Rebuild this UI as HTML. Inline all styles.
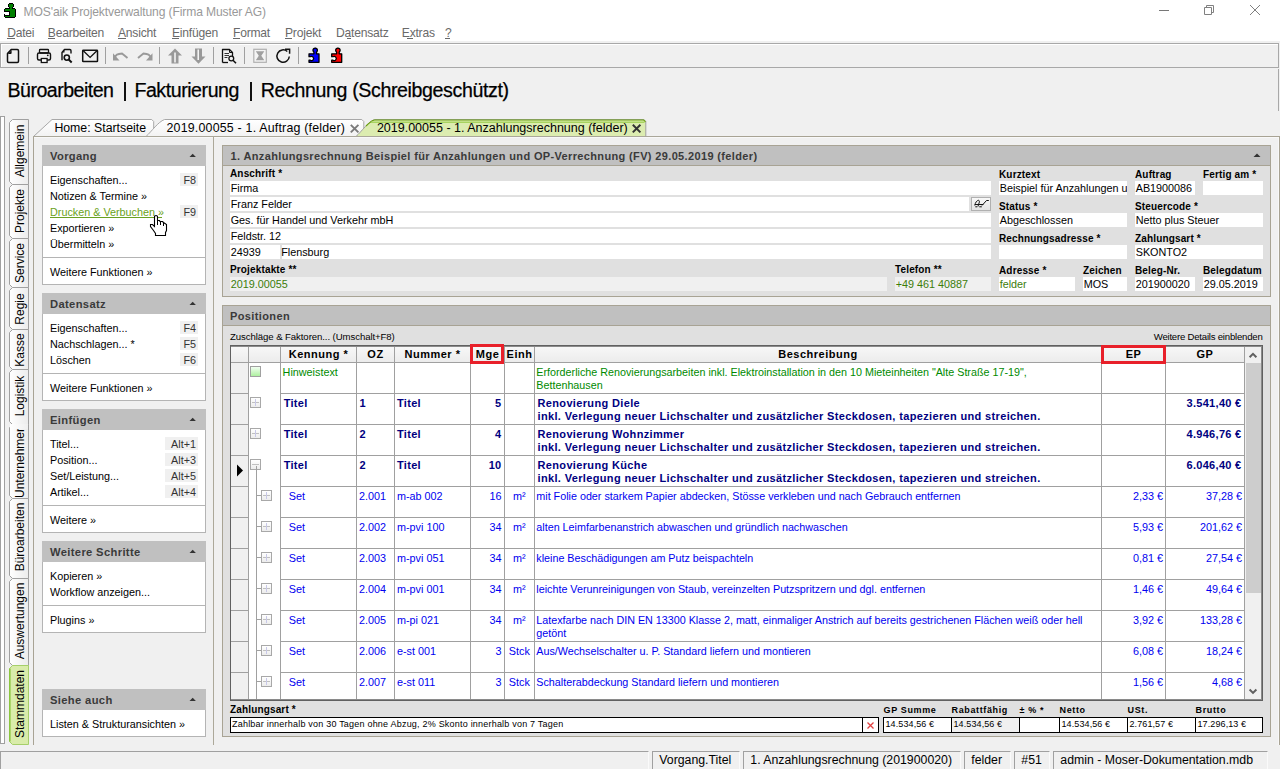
<!DOCTYPE html>
<html><head><meta charset="utf-8">
<style>
html,body{margin:0;padding:0;}
body{width:1280px;height:770px;overflow:hidden;position:relative;background:#f0f0f0;font-family:"Liberation Sans",sans-serif;}
.t{position:absolute;white-space:pre;line-height:1;}
.r{position:absolute;box-sizing:border-box;}
svg{position:absolute;}
</style></head><body>
<div class="r" style="left:0px;top:0px;width:1280px;height:41px;background:#fff;"></div><svg style="left:0;top:0" width="20" height="20" viewBox="0 0 20 20" shape-rendering="crispEdges"><rect x="9" y="3" width="4" height="1" fill="#000"/><rect x="8" y="4" width="1" height="3" fill="#000"/><rect x="13" y="4" width="1" height="3" fill="#000"/><rect x="9" y="7" width="1" height="1" fill="#000"/><rect x="12" y="7" width="1" height="1" fill="#000"/><rect x="5" y="8" width="5" height="1" fill="#000"/><rect x="12" y="8" width="3" height="1" fill="#000"/><rect x="4" y="9" width="1" height="3" fill="#000"/><rect x="4" y="14" width="1" height="3" fill="#000"/><rect x="15" y="9" width="1" height="8" fill="#000"/><rect x="5" y="17" width="10" height="1" fill="#000"/><rect x="5" y="11" width="4" height="1" fill="#000"/><rect x="9" y="11" width="1" height="5" fill="#000"/><rect x="5" y="15" width="4" height="1" fill="#000"/><rect x="9" y="4" width="4" height="3" fill="#008000"/><rect x="10" y="7" width="2" height="1" fill="#008000"/><rect x="10" y="8" width="2" height="1" fill="#008000"/><rect x="5" y="9" width="10" height="2" fill="#008000"/><rect x="10" y="11" width="5" height="5" fill="#008000"/><rect x="5" y="16" width="10" height="1" fill="#008000"/></svg><div class="t" style="top:6.36px;font-size:12.1px;color:#999;letter-spacing:-0.12px;left:23.5px;">MOS&#x27;aik Projektverwaltung (Firma Muster AG)</div><div class="r" style="left:1159px;top:10px;width:10px;height:1px;background:#777;"></div><svg style="left:1202px;top:4px" width="14" height="14" viewBox="0 0 14 14"><path d="M2.5 3.5h7v7h-7z M4.5 3.5v-2h7v7h-2" fill="none" stroke="#808080" stroke-width="1"/></svg><svg style="left:1248px;top:4px" width="14" height="13" viewBox="0 0 14 13"><path d="M2 1L12 11M12 1L2 11" stroke="#808080" stroke-width="1"/></svg><div class="t" style="top:26.96px;font-size:12.1px;color:#6a6a6a;letter-spacing:-0.22px;left:7.2px;">Datei</div><div class="t" style="top:26.96px;font-size:12.1px;color:#6a6a6a;letter-spacing:-0.22px;left:47.8px;">Bearbeiten</div><div class="t" style="top:26.96px;font-size:12.1px;color:#6a6a6a;letter-spacing:-0.22px;left:118px;">Ansicht</div><div class="t" style="top:26.96px;font-size:12.1px;color:#6a6a6a;letter-spacing:-0.22px;left:172px;">Einfügen</div><div class="t" style="top:26.96px;font-size:12.1px;color:#6a6a6a;letter-spacing:-0.22px;left:233px;">Format</div><div class="t" style="top:26.96px;font-size:12.1px;color:#6a6a6a;letter-spacing:-0.22px;left:285px;">Projekt</div><div class="t" style="top:26.96px;font-size:12.1px;color:#6a6a6a;letter-spacing:-0.22px;left:336px;">Datensatz</div><div class="t" style="top:26.96px;font-size:12.1px;color:#6a6a6a;letter-spacing:-0.22px;left:401.8px;">Extras</div><div class="t" style="top:26.96px;font-size:12.1px;color:#6a6a6a;letter-spacing:-0.22px;left:445px;">?</div><div class="r" style="left:7px;top:38px;width:8px;height:1px;background:#6a6a6a;"></div><div class="r" style="left:47.5px;top:38px;width:7px;height:1px;background:#6a6a6a;"></div><div class="r" style="left:118px;top:38px;width:7.5px;height:1px;background:#6a6a6a;"></div><div class="r" style="left:172px;top:38px;width:6.5px;height:1px;background:#6a6a6a;"></div><div class="r" style="left:233px;top:38px;width:6.5px;height:1px;background:#6a6a6a;"></div><div class="r" style="left:285px;top:38px;width:7px;height:1px;background:#6a6a6a;"></div><div class="r" style="left:346.5px;top:38px;width:4px;height:1px;background:#6a6a6a;"></div><div class="r" style="left:406.5px;top:38px;width:6px;height:1px;background:#6a6a6a;"></div><div class="r" style="left:445px;top:38px;width:5px;height:1px;background:#6a6a6a;"></div><div class="r" style="left:0px;top:41px;width:1280px;height:2px;background:#f0f0f0;"></div><div class="r" style="left:0px;top:43px;width:1279px;height:25px;border:1px solid #a8a8a8;background:#f0f0f0;"></div><div class="r" style="left:1278px;top:69px;width:1px;height:42px;background:#a8a8a8;"></div><div class="r" style="left:1px;top:44px;width:1277px;height:1px;background:#fff;"></div><div class="r" style="left:1px;top:44px;width:1px;height:23px;background:#fff;"></div><div class="r" style="left:28px;top:47px;width:1px;height:17px;background:#a0a0a0;"></div><div class="r" style="left:105px;top:47px;width:1px;height:17px;background:#a0a0a0;"></div><div class="r" style="left:159px;top:47px;width:1px;height:17px;background:#a0a0a0;"></div><div class="r" style="left:213px;top:47px;width:1px;height:17px;background:#a0a0a0;"></div><div class="r" style="left:244px;top:47px;width:1px;height:17px;background:#a0a0a0;"></div><div class="r" style="left:298px;top:47px;width:1px;height:17px;background:#a0a0a0;"></div><svg style="left:0;top:43px" width="360" height="25" viewBox="0 0 360 25"><path d="M7.5 10.5L11.2 6.5H17.3Q18.5 6.5 18.5 7.7V18.3Q18.5 19.5 17.3 19.5H8.7Q7.5 19.5 7.5 18.3Z" fill="none" stroke="#111" stroke-width="1.5" stroke-linejoin="round"/><path d="M7.8 10.9L11.6 6.9V9.9Q11.6 10.9 10.6 10.9Z" fill="#111"/><rect x="39.5" y="6.5" width="9" height="3.5" rx="0.8" fill="none" stroke="#111" stroke-width="1.3"/><rect x="37.5" y="10" width="13" height="7" rx="1.5" fill="none" stroke="#111" stroke-width="1.4"/><rect x="41.3" y="15.5" width="5.8" height="4" fill="#fff" stroke="#111" stroke-width="1.3"/><circle cx="47.8" cy="12.3" r="0.9" fill="#111"/><path d="M62 17.3V9.5L64.5 6.5H69.8Q71 6.5 71 7.7V10.5" fill="none" stroke="#111" stroke-width="1.4" stroke-linejoin="round"/><path d="M62.3 9.5L64.5 7V9.5Z" fill="#111"/><circle cx="66.8" cy="14.6" r="2.6" fill="#f0f0f0" stroke="#111" stroke-width="1.6"/><path d="M68.7 16.5L71.7 19.5" stroke="#111" stroke-width="1.9"/><rect x="82.7" y="7.3" width="14.8" height="11.2" rx="0.6" fill="none" stroke="#111" stroke-width="1.5"/><path d="M83 7.6L90.1 14.4L97.2 7.6" fill="none" stroke="#111" stroke-width="1.4"/><path d="M114 14.5L117 11.5L119 11L122 10.5L124.5 12.5L127.5 15" fill="none" stroke="#999" stroke-width="1.9"/><path d="M113 10.2V17.5H119.5Z" fill="#999"/><path d="M151.5 14.5L148.5 11.5L146.5 11L143.5 10.5L141 12.5L138 15" fill="none" stroke="#999" stroke-width="1.9"/><path d="M152.5 10.2V17.5H146Z" fill="#999"/><path d="M168 12.5L175 5.5L182 12.5H178.5V20.5H171.5V12.5Z" fill="#999"/><rect x="174.3" y="9.5" width="1.4" height="10" fill="#fff"/><path d="M191.5 13.5H195V5.5H202V13.5H205.5L198.5 20.8Z" fill="#999"/><rect x="197.5" y="6.5" width="1.4" height="10.5" fill="#fff"/><path d="M222.5 19.5V6.5H229.5L232.5 9.5V14" fill="none" stroke="#111" stroke-width="1.3" stroke-linejoin="round"/><path d="M222.5 19.5H228" fill="none" stroke="#111" stroke-width="1.3"/><path d="M229.5 6.5V9.5H232.5" fill="none" stroke="#111" stroke-width="1"/><path d="M224.5 10.5h4.5M224.5 12.5h4.5M224.5 14.5h3" stroke="#333" stroke-width="1"/><circle cx="231.3" cy="15.5" r="2.4" fill="#f0f0f0" stroke="#111" stroke-width="1.3"/><path d="M233 17.2L236 20.2" stroke="#111" stroke-width="1.6"/><rect x="253.8" y="6.3" width="12.5" height="13" fill="#f4f4f4" stroke="#b0b0b0" stroke-width="1.2"/><path d="M255.8 8.3H264.3L261.3 12.8L264.3 17.3H255.8L258.8 12.8Z" fill="#a0a0a0"/><path d="M287.3 8.5A6.2 6.2 0 1 0 289.3 13.5" fill="none" stroke="#111" stroke-width="1.5"/><path d="M285 6.3H289.6V10.8" fill="none" stroke="#111" stroke-width="1.5"/><g transform="translate(0,-43)"><circle cx="311.5" cy="58.45" r="1.5" fill="#fff"/><path d="M309 53.8H313.9V52A2.2 2.2 0 1 1 316.5 52V53.8H319V62.3H309V60.2H310.4A2.07 2.07 0 1 0 310.4 56.7H309Z" fill="#0000ff" stroke="#000" stroke-width="1.3" stroke-linejoin="round"/><circle cx="334.2" cy="58.45" r="1.5" fill="#fff"/><path d="M331.7 53.8H336.6V52A2.2 2.2 0 1 1 339.2 52V53.8H341.7V62.3H331.7V60.2H333.1A2.07 2.07 0 1 0 333.1 56.7H331.7Z" fill="#ff0000" stroke="#000" stroke-width="1.3" stroke-linejoin="round"/></g></svg><div class="t" style="top:81.01px;font-size:19.6px;color:#000;letter-spacing:-0.52px;left:7.5px;-webkit-text-stroke:0.25px #000;">Büroarbeiten</div><div class="t" style="top:81.01px;font-size:19.6px;color:#000;letter-spacing:-0.45px;left:134.4px;-webkit-text-stroke:0.25px #000;">Fakturierung</div><div class="t" style="top:81.01px;font-size:19.6px;color:#000;letter-spacing:-0.38px;left:260.8px;-webkit-text-stroke:0.25px #000;">Rechnung (Schreibgeschützt)</div><div class="r" style="left:124px;top:82px;width:2px;height:19px;background:#111;"></div><div class="r" style="left:250px;top:82px;width:2px;height:19px;background:#111;"></div><div class="r" style="left:0px;top:116px;width:5px;height:628px;border:1px solid #a0a0a0;background:#fff;"></div><svg style="left:0;top:0" width="34" height="770" viewBox="0 0 34 770"><defs><linearGradient id="tg" x1="0" x2="1" y1="0" y2="0"><stop offset="0" stop-color="#fff"/><stop offset="1" stop-color="#ececec"/></linearGradient></defs><path d="M28.5 119.5H12.5L9.5 122.5V181.5L12.5 184.5H28.5Z" fill="url(#tg)" stroke="#a0a0a0" stroke-width="1"/><path d="M28.5 184.5H12.5L9.5 187.5V235.5L12.5 238.5H28.5Z" fill="url(#tg)" stroke="#a0a0a0" stroke-width="1"/><path d="M28.5 238.5H12.5L9.5 241.5V284.5L12.5 287.5H28.5Z" fill="url(#tg)" stroke="#a0a0a0" stroke-width="1"/><path d="M28.5 287.5H12.5L9.5 290.5V326.5L12.5 329.5H28.5Z" fill="url(#tg)" stroke="#a0a0a0" stroke-width="1"/><path d="M28.5 329.5H12.5L9.5 332.5V366.5L12.5 369.5H28.5Z" fill="url(#tg)" stroke="#a0a0a0" stroke-width="1"/><path d="M28.5 369.5H12.5L9.5 372.5V421.5L12.5 424.5H28.5Z" fill="url(#tg)" stroke="#a0a0a0" stroke-width="1"/><path d="M28.5 424.5H12.5L9.5 427.5V495.5L12.5 498.5H28.5Z" fill="url(#tg)" stroke="#a0a0a0" stroke-width="1"/><path d="M28.5 498.5H12.5L9.5 501.5V575.5L12.5 578.5H28.5Z" fill="url(#tg)" stroke="#a0a0a0" stroke-width="1"/><path d="M28.5 578.5H12.5L9.5 581.5V662.5L12.5 665.5H28.5Z" fill="url(#tg)" stroke="#a0a0a0" stroke-width="1"/><path d="M28.5 665.5H12.5L9.5 668.5V741.5L12.5 744.5H28.5Z" fill="#d9ecaa" stroke="#a6cf6a" stroke-width="1"/><path d="M9.8 668.5V741.5" stroke="#8cc63f" stroke-width="1.6"/></svg><div class="t" style="left:-80.3px;top:144.3px;width:200px;height:14px;text-align:center;font-size:12px;line-height:14px;color:#000;transform:rotate(-90deg);">Allgemein</div><div class="t" style="left:-80.3px;top:203.5px;width:200px;height:14px;text-align:center;font-size:12px;line-height:14px;color:#000;transform:rotate(-90deg);">Projekte</div><div class="t" style="left:-80.3px;top:256px;width:200px;height:14px;text-align:center;font-size:12px;line-height:14px;color:#000;transform:rotate(-90deg);">Service</div><div class="t" style="left:-80.3px;top:301.5px;width:200px;height:14px;text-align:center;font-size:12px;line-height:14px;color:#000;transform:rotate(-90deg);">Regie</div><div class="t" style="left:-80.3px;top:343px;width:200px;height:14px;text-align:center;font-size:12px;line-height:14px;color:#000;transform:rotate(-90deg);">Kasse</div><div class="t" style="left:-80.3px;top:389px;width:200px;height:14px;text-align:center;font-size:12px;line-height:14px;color:#000;transform:rotate(-90deg);">Logistik</div><div class="t" style="left:-80.3px;top:456px;width:200px;height:14px;text-align:center;font-size:12px;line-height:14px;color:#000;transform:rotate(-90deg);">Unternehmer</div><div class="t" style="left:-80.3px;top:530px;width:200px;height:14px;text-align:center;font-size:12px;line-height:14px;color:#000;transform:rotate(-90deg);">Büroarbeiten</div><div class="t" style="left:-80.3px;top:614px;width:200px;height:14px;text-align:center;font-size:12px;line-height:14px;color:#000;transform:rotate(-90deg);">Auswertungen</div><div class="t" style="left:-80.3px;top:697.3px;width:200px;height:14px;text-align:center;font-size:12px;line-height:14px;color:#000;transform:rotate(-90deg);">Stammdaten</div><div class="r" style="left:10px;top:424px;width:18px;height:5px;background:linear-gradient(90deg,#fff,#f0f0f0);"></div><div class="r" style="left:33px;top:136px;width:1247px;height:609px;border:1px solid #a8a394;border-bottom:none;background:#f0f0f0;"></div><div class="r" style="left:34px;top:137px;width:1244px;height:1px;background:#f8f8f8;"></div><div class="r" style="left:1278px;top:137px;width:1px;height:608px;background:#f8f8f8;"></div><svg style="left:0;top:0" width="700" height="140" viewBox="0 0 700 140"><defs><linearGradient id="tb" x1="0" x2="0" y1="0" y2="1"><stop offset="0" stop-color="#ffffff"/><stop offset="1" stop-color="#f2f2f2"/></linearGradient></defs><path d="M33.5 136.5L52 119.5H151.7L153.7 121.5V136.5Z" fill="url(#tb)" stroke="#a8a8a8" stroke-width="1"/><path d="M146 136.5C152 131 158 122 164.5 119.5H361.8L363.8 121.5V136.5Z" fill="url(#tb)" stroke="#a8a8a8" stroke-width="1"/><path d="M356 136.5C362 131 368 122 374.5 119.5H643.8L645.8 121.5V136.5Z" fill="#dcecb0" stroke="#a0a0a0" stroke-width="1"/><path d="M366 126C369 123 371.5 120.5 374.5 120H643.8L645.5 121.8" fill="none" stroke="#6aa010" stroke-width="1.2"/><path d="M371 122.2H644.5" stroke="#a8d460" stroke-width="1.6"/><path d="M33 136.5H700" stroke="#aaa79a" stroke-width="1"/></svg><div class="t" style="top:122.34px;font-size:12.3px;color:#000;left:54.4px;">Home: Startseite</div><div class="t" style="top:122.25px;font-size:12.4px;color:#000;letter-spacing:0.2px;left:166.5px;">2019.00055 - 1. Auftrag (felder)</div><svg style="left:349px;top:123px" width="11" height="11" viewBox="0 0 11 11"><path d="M1.8 1.8l7.6 7.6M9.4 1.8l-7.6 7.6" stroke="#7a7a7a" stroke-width="1.9"/></svg><div class="t" style="top:122.17px;font-size:12.5px;color:#000;left:376.9px;">2019.00055 - 1. Anzahlungsrechnung (felder)</div><svg style="left:631px;top:123px" width="11" height="11" viewBox="0 0 11 11"><path d="M1.8 1.8l7.6 7.6M9.4 1.8l-7.6 7.6" stroke="#333" stroke-width="2"/></svg><div class="r" style="left:213px;top:136px;width:1px;height:609px;background:#aca899;"></div><div class="r" style="left:42px;top:145px;width:164px;height:140px;border:1px solid #b4b4b4;background:#fff;"></div><div class="r" style="left:42px;top:145px;width:164px;height:21px;background:#c0c0c0;"></div><div class="t" style="top:150.82px;font-size:11.2px;color:#3a3a3a;font-weight:700;letter-spacing:0.35px;left:50px;">Vorgang</div><svg style="left:188px;top:152px" width="9" height="6" viewBox="0 0 9 6"><path d="M1.5 5L4.7 1.7L7.9 5z" fill="#333"/></svg><div class="t" style="top:174.86px;font-size:10.8px;color:#000;left:50px;">Eigenschaften...</div><div class="r" style="left:180px;top:173px;width:18px;height:13px;background:#f0f0f0;"></div><div class="t" style="top:174.86px;font-size:10.8px;color:#333;right:1084px;">F8</div><div class="t" style="top:190.86px;font-size:10.8px;color:#000;left:50px;">Notizen &amp; Termine »</div><div class="t" style="top:206.86px;font-size:10.8px;color:#6aa121;left:50px;">Drucken &amp; Verbuchen »</div><div class="r" style="left:50px;top:216.6px;width:112px;height:1px;background:#6aa121;"></div><div class="r" style="left:180px;top:205px;width:18px;height:13px;background:#f0f0f0;"></div><div class="t" style="top:206.86px;font-size:10.8px;color:#333;right:1084px;">F9</div><div class="t" style="top:222.86px;font-size:10.8px;color:#000;left:50px;">Exportieren »</div><div class="t" style="top:238.86px;font-size:10.8px;color:#000;left:50px;">Übermitteln »</div><div class="r" style="left:42px;top:257px;width:164px;height:1px;background:#b4b4b4;"></div><div class="t" style="top:266.86px;font-size:10.8px;color:#000;left:50px;">Weitere Funktionen »</div><div class="r" style="left:42px;top:293px;width:164px;height:108px;border:1px solid #b4b4b4;background:#fff;"></div><div class="r" style="left:42px;top:293px;width:164px;height:21px;background:#c0c0c0;"></div><div class="t" style="top:298.82px;font-size:11.2px;color:#3a3a3a;font-weight:700;letter-spacing:0.35px;left:50px;">Datensatz</div><svg style="left:188px;top:300px" width="9" height="6" viewBox="0 0 9 6"><path d="M1.5 5L4.7 1.7L7.9 5z" fill="#333"/></svg><div class="t" style="top:322.86px;font-size:10.8px;color:#000;left:50px;">Eigenschaften...</div><div class="r" style="left:180px;top:321px;width:18px;height:13px;background:#f0f0f0;"></div><div class="t" style="top:322.86px;font-size:10.8px;color:#333;right:1084px;">F4</div><div class="t" style="top:338.86px;font-size:10.8px;color:#000;left:50px;">Nachschlagen... *</div><div class="r" style="left:180px;top:337px;width:18px;height:13px;background:#f0f0f0;"></div><div class="t" style="top:338.86px;font-size:10.8px;color:#333;right:1084px;">F5</div><div class="t" style="top:354.86px;font-size:10.8px;color:#000;left:50px;">Löschen</div><div class="r" style="left:180px;top:353px;width:18px;height:13px;background:#f0f0f0;"></div><div class="t" style="top:354.86px;font-size:10.8px;color:#333;right:1084px;">F6</div><div class="r" style="left:42px;top:373px;width:164px;height:1px;background:#b4b4b4;"></div><div class="t" style="top:382.86px;font-size:10.8px;color:#000;left:50px;">Weitere Funktionen »</div><div class="r" style="left:42px;top:409px;width:164px;height:124px;border:1px solid #b4b4b4;background:#fff;"></div><div class="r" style="left:42px;top:409px;width:164px;height:21px;background:#c0c0c0;"></div><div class="t" style="top:414.82px;font-size:11.2px;color:#3a3a3a;font-weight:700;letter-spacing:0.35px;left:50px;">Einfügen</div><svg style="left:188px;top:416px" width="9" height="6" viewBox="0 0 9 6"><path d="M1.5 5L4.7 1.7L7.9 5z" fill="#333"/></svg><div class="t" style="top:438.86px;font-size:10.8px;color:#000;left:50px;">Titel...</div><div class="r" style="left:165px;top:437px;width:33px;height:13px;background:#f0f0f0;"></div><div class="t" style="top:438.86px;font-size:10.8px;color:#333;right:1084px;">Alt+1</div><div class="t" style="top:454.86px;font-size:10.8px;color:#000;left:50px;">Position...</div><div class="r" style="left:165px;top:453px;width:33px;height:13px;background:#f0f0f0;"></div><div class="t" style="top:454.86px;font-size:10.8px;color:#333;right:1084px;">Alt+3</div><div class="t" style="top:470.86px;font-size:10.8px;color:#000;left:50px;">Set/Leistung...</div><div class="r" style="left:165px;top:469px;width:33px;height:13px;background:#f0f0f0;"></div><div class="t" style="top:470.86px;font-size:10.8px;color:#333;right:1084px;">Alt+5</div><div class="t" style="top:486.86px;font-size:10.8px;color:#000;left:50px;">Artikel...</div><div class="r" style="left:165px;top:485px;width:33px;height:13px;background:#f0f0f0;"></div><div class="t" style="top:486.86px;font-size:10.8px;color:#333;right:1084px;">Alt+4</div><div class="r" style="left:42px;top:505px;width:164px;height:1px;background:#b4b4b4;"></div><div class="t" style="top:514.86px;font-size:10.8px;color:#000;left:50px;">Weitere »</div><div class="r" style="left:42px;top:541px;width:164px;height:92px;border:1px solid #b4b4b4;background:#fff;"></div><div class="r" style="left:42px;top:541px;width:164px;height:21px;background:#c0c0c0;"></div><div class="t" style="top:546.82px;font-size:11.2px;color:#3a3a3a;font-weight:700;letter-spacing:0.35px;left:50px;">Weitere Schritte</div><svg style="left:188px;top:548px" width="9" height="6" viewBox="0 0 9 6"><path d="M1.5 5L4.7 1.7L7.9 5z" fill="#333"/></svg><div class="t" style="top:570.86px;font-size:10.8px;color:#000;left:50px;">Kopieren »</div><div class="t" style="top:586.86px;font-size:10.8px;color:#000;left:50px;">Workflow anzeigen...</div><div class="r" style="left:42px;top:605px;width:164px;height:1px;background:#b4b4b4;"></div><div class="t" style="top:614.86px;font-size:10.8px;color:#000;left:50px;">Plugins »</div><div class="r" style="left:42px;top:689px;width:164px;height:48px;border:1px solid #b4b4b4;background:#fff;"></div><div class="r" style="left:42px;top:689px;width:164px;height:21px;background:#c0c0c0;"></div><div class="t" style="top:694.82px;font-size:11.2px;color:#3a3a3a;font-weight:700;letter-spacing:0.35px;left:50px;">Siehe auch</div><svg style="left:188px;top:696px" width="9" height="6" viewBox="0 0 9 6"><path d="M1.5 5L4.7 1.7L7.9 5z" fill="#333"/></svg><div class="t" style="top:718.86px;font-size:10.8px;color:#000;left:50px;">Listen &amp; Strukturansichten »</div><svg style="left:145px;top:205px" width="24" height="34" viewBox="0 0 24 34"><path d="M9.5 11.5Q9.5 10.5 11 10.5Q12.5 10.5 12.5 11.5V15.5H14.5L15 16.5H17.5L18.5 17.5L20 18.5L21.5 19.5V25.5L20.5 27.5V30.5H10.5V28.5L8.5 25.5L5.5 21.5V19.5H7.5L9.5 21.5Z" fill="#fff" stroke="#000" stroke-width="1.1" stroke-linejoin="miter"/><path d="M12.5 15.5V20M15.5 16.5V20M18.5 17.5V21" stroke="#000" stroke-width="1"/></svg><div class="r" style="left:222px;top:145px;width:1049px;height:152px;border:1px solid #a8a394;background:#e0e0e0;"></div><div class="r" style="left:223px;top:146px;width:1047px;height:19px;background:#c0c0c0;"></div><div class="r" style="left:223px;top:165px;width:1047px;height:1px;background:#a8a394;"></div><div class="t" style="top:150.69px;font-size:11px;color:#3a3a3a;font-weight:700;letter-spacing:0.355px;left:230.6px;">1. Anzahlungsrechnung Beispiel für Anzahlungen und OP-Verrechnung (FV) 29.05.2019 (felder)</div><svg style="left:1253px;top:152px" width="8" height="6" viewBox="0 0 8 6"><path d="M0.5 5L4 1.5L7.5 5z" fill="#333"/></svg><div class="t" style="top:169.13px;font-size:10px;color:#000;font-weight:700;letter-spacing:0.15px;left:230px;">Anschrift *</div><div class="r" style="left:230px;top:181px;width:761px;height:14px;background:#fff;"></div><div class="t" style="top:182.86px;font-size:10.8px;color:#000;left:230.7px;">Firma</div><div class="r" style="left:230px;top:197px;width:739px;height:14px;background:#fff;"></div><div class="t" style="top:198.86px;font-size:10.8px;color:#000;left:230.7px;">Franz Felder</div><div class="r" style="left:230px;top:213px;width:761px;height:14px;background:#fff;"></div><div class="t" style="top:214.86px;font-size:10.8px;color:#000;left:230.7px;">Ges. für Handel und Verkehr mbH</div><div class="r" style="left:230px;top:229px;width:761px;height:14px;background:#fff;"></div><div class="t" style="top:230.86px;font-size:10.8px;color:#000;left:230.7px;">Feldstr. 12</div><div class="r" style="left:971px;top:197px;width:20px;height:14px;border:1px solid #b0b0b0;background:linear-gradient(#f8f8f8,#e4e4e4);"></div><svg style="left:965px;top:194px" width="30" height="20" viewBox="965 194 30 20"><path d="M974.8 205.5C975.3 202.5 976.8 200.3 978.7 200.3C979.8 200.6 979.5 202.5 978.6 204.2L978 206.5M974.8 204.5H983.3M975.3 206.8H977.3M979.3 206.8H981.8M982 205.5L986.5 200.5H988.8" fill="none" stroke="#111" stroke-width="1"/></svg><div class="r" style="left:230px;top:245px;width:50px;height:14px;background:#fff;"></div><div class="r" style="left:282px;top:245px;width:709px;height:14px;background:#fff;"></div><div class="t" style="top:246.86px;font-size:10.8px;color:#000;left:230.7px;">24939</div><div class="t" style="top:246.86px;font-size:10.8px;color:#000;left:281.2px;">Flensburg</div><div class="t" style="top:265.14px;font-size:10px;color:#000;font-weight:700;letter-spacing:0.15px;left:230px;">Projektakte **</div><div class="r" style="left:230px;top:277px;width:657px;height:14px;background:#f0f0f0;"></div><div class="t" style="top:278.86px;font-size:10.8px;color:#3c7d0a;left:230.7px;">2019.00055</div><div class="t" style="top:265.14px;font-size:10px;color:#000;font-weight:700;letter-spacing:0.15px;left:895px;">Telefon **</div><div class="r" style="left:895px;top:277px;width:96px;height:14px;background:#f0f0f0;"></div><div class="t" style="top:278.86px;font-size:10.8px;color:#3c7d0a;left:895.7px;">+49 461 40887</div><div class="t" style="top:169.53px;font-size:10px;color:#000;font-weight:700;letter-spacing:0.15px;left:999px;">Kurztext</div><div class="r" style="left:999px;top:181px;width:128px;height:14px;background:#fff;"></div><div class="t" style="top:182.86px;font-size:10.8px;color:#000;left:999.7px;width:127px;overflow:hidden;">Beispiel für Anzahlungen u</div><div class="t" style="top:201.53px;font-size:10px;color:#000;font-weight:700;letter-spacing:0.15px;left:999px;">Status *</div><div class="r" style="left:999px;top:213px;width:128px;height:14px;background:#fff;"></div><div class="t" style="top:214.86px;font-size:10.8px;color:#000;left:999.7px;">Abgeschlossen</div><div class="t" style="top:233.53px;font-size:10px;color:#000;font-weight:700;letter-spacing:0.15px;left:999px;">Rechnungsadresse *</div><div class="r" style="left:999px;top:245px;width:128px;height:14px;background:#fff;"></div><div class="t" style="top:265.54px;font-size:10px;color:#000;font-weight:700;letter-spacing:0.15px;left:999px;">Adresse *</div><div class="r" style="left:999px;top:277px;width:76px;height:14px;background:#fff;"></div><div class="t" style="top:278.86px;font-size:10.8px;color:#3c7d0a;left:999.7px;">felder</div><div class="t" style="top:265.54px;font-size:10px;color:#000;font-weight:700;letter-spacing:0.15px;left:1083px;">Zeichen</div><div class="r" style="left:1083px;top:277px;width:44px;height:14px;background:#fff;"></div><div class="t" style="top:278.86px;font-size:10.8px;color:#000;left:1083.7px;">MOS</div><div class="t" style="top:169.53px;font-size:10px;color:#000;font-weight:700;letter-spacing:0.15px;left:1135px;">Auftrag</div><div class="r" style="left:1135px;top:181px;width:60px;height:14px;background:#fff;"></div><div class="t" style="top:182.86px;font-size:10.8px;color:#000;left:1135.7px;">AB1900086</div><div class="t" style="top:169.53px;font-size:10px;color:#000;font-weight:700;letter-spacing:0.15px;left:1203px;">Fertig am *</div><div class="r" style="left:1203px;top:181px;width:60px;height:14px;background:#fff;"></div><div class="t" style="top:201.53px;font-size:10px;color:#000;font-weight:700;letter-spacing:0.15px;left:1135px;">Steuercode *</div><div class="r" style="left:1135px;top:213px;width:128px;height:14px;background:#fff;"></div><div class="t" style="top:214.86px;font-size:10.8px;color:#000;left:1135.7px;">Netto plus Steuer</div><div class="t" style="top:233.53px;font-size:10px;color:#000;font-weight:700;letter-spacing:0.15px;left:1135px;">Zahlungsart *</div><div class="r" style="left:1135px;top:245px;width:128px;height:14px;background:#fff;"></div><div class="t" style="top:246.86px;font-size:10.8px;color:#000;left:1135.7px;">SKONTO2</div><div class="t" style="top:265.54px;font-size:10px;color:#000;font-weight:700;letter-spacing:0.15px;left:1135px;">Beleg-Nr.</div><div class="r" style="left:1135px;top:277px;width:60px;height:14px;background:#fff;"></div><div class="t" style="top:278.86px;font-size:10.8px;color:#000;left:1135.7px;">201900020</div><div class="t" style="top:265.54px;font-size:10px;color:#000;font-weight:700;letter-spacing:0.15px;left:1203px;">Belegdatum</div><div class="r" style="left:1203px;top:277px;width:60px;height:14px;background:#fff;"></div><div class="t" style="top:278.86px;font-size:10.8px;color:#000;left:1203.7px;">29.05.2019</div><div class="r" style="left:222px;top:305px;width:1049px;height:432px;border:1px solid #a8a394;background:#e0e0e0;"></div><div class="r" style="left:223px;top:306px;width:1047px;height:19px;background:#c0c0c0;"></div><div class="r" style="left:223px;top:325px;width:1047px;height:1px;background:#a8a394;"></div><div class="t" style="top:310.89px;font-size:11px;color:#3a3a3a;font-weight:700;letter-spacing:0.38px;left:230px;">Positionen</div><div class="t" style="top:332.17px;font-size:9.6px;color:#000;letter-spacing:-0.08px;left:230px;">Zuschläge &amp; Faktoren... (Umschalt+F8)</div><div class="t" style="top:332.17px;font-size:9.6px;color:#000;letter-spacing:-0.22px;right:17.5px;">Weitere Details einblenden</div><div class="r" style="left:230px;top:345px;width:1033px;height:356px;border:1px solid #606060;background:#fff;"></div><div class="r" style="left:231px;top:346px;width:1031px;height:354px;border:1px solid #8a8a8a;"></div><div class="r" style="left:231px;top:347px;width:1014px;height:15px;background:linear-gradient(#f7f7f7,#ececec);"></div><div class="r" style="left:231px;top:362px;width:1014px;height:1px;background:#a0a0a0;"></div><div class="r" style="left:231px;top:363px;width:17px;height:336px;background:#f0f0f0;"></div><div class="r" style="left:231px;top:393px;width:17px;height:1px;background:#a0a0a0;"></div><div class="r" style="left:280px;top:393px;width:965px;height:1px;background:#a0a0a0;"></div><div class="r" style="left:231px;top:424px;width:17px;height:1px;background:#a0a0a0;"></div><div class="r" style="left:280px;top:424px;width:965px;height:1px;background:#a0a0a0;"></div><div class="r" style="left:231px;top:455px;width:17px;height:1px;background:#a0a0a0;"></div><div class="r" style="left:280px;top:455px;width:965px;height:1px;background:#a0a0a0;"></div><div class="r" style="left:231px;top:486px;width:17px;height:1px;background:#a0a0a0;"></div><div class="r" style="left:280px;top:486px;width:965px;height:1px;background:#a0a0a0;"></div><div class="r" style="left:231px;top:517px;width:17px;height:1px;background:#a0a0a0;"></div><div class="r" style="left:280px;top:517px;width:965px;height:1px;background:#a0a0a0;"></div><div class="r" style="left:231px;top:548px;width:17px;height:1px;background:#a0a0a0;"></div><div class="r" style="left:280px;top:548px;width:965px;height:1px;background:#a0a0a0;"></div><div class="r" style="left:231px;top:579px;width:17px;height:1px;background:#a0a0a0;"></div><div class="r" style="left:280px;top:579px;width:965px;height:1px;background:#a0a0a0;"></div><div class="r" style="left:231px;top:610px;width:17px;height:1px;background:#a0a0a0;"></div><div class="r" style="left:280px;top:610px;width:965px;height:1px;background:#a0a0a0;"></div><div class="r" style="left:231px;top:641px;width:17px;height:1px;background:#a0a0a0;"></div><div class="r" style="left:280px;top:641px;width:965px;height:1px;background:#a0a0a0;"></div><div class="r" style="left:231px;top:672px;width:17px;height:1px;background:#a0a0a0;"></div><div class="r" style="left:280px;top:672px;width:965px;height:1px;background:#a0a0a0;"></div><div class="r" style="left:248px;top:347px;width:1px;height:352px;background:#a0a0a0;"></div><div class="r" style="left:280px;top:347px;width:1px;height:352px;background:#a0a0a0;"></div><div class="r" style="left:356px;top:347px;width:1px;height:352px;background:#a0a0a0;"></div><div class="r" style="left:394px;top:347px;width:1px;height:352px;background:#a0a0a0;"></div><div class="r" style="left:470px;top:347px;width:1px;height:352px;background:#a0a0a0;"></div><div class="r" style="left:504px;top:347px;width:1px;height:352px;background:#a0a0a0;"></div><div class="r" style="left:534px;top:347px;width:1px;height:352px;background:#a0a0a0;"></div><div class="r" style="left:1101px;top:347px;width:1px;height:352px;background:#a0a0a0;"></div><div class="r" style="left:1165px;top:347px;width:1px;height:352px;background:#a0a0a0;"></div><div class="r" style="left:1244px;top:347px;width:1px;height:352px;background:#a0a0a0;"></div><div class="t" style="top:348.59px;font-size:11px;color:#000;font-weight:700;letter-spacing:0.5px;left:118.5px;width:400px;text-align:center;">Kennung *</div><div class="t" style="top:348.59px;font-size:11px;color:#000;font-weight:700;letter-spacing:0.5px;left:175.5px;width:400px;text-align:center;">OZ</div><div class="t" style="top:348.59px;font-size:11px;color:#000;font-weight:700;letter-spacing:0.5px;left:232.5px;width:400px;text-align:center;">Nummer *</div><div class="t" style="top:348.59px;font-size:11px;color:#000;font-weight:700;letter-spacing:0.5px;left:287.5px;width:400px;text-align:center;">Mge</div><div class="t" style="top:348.59px;font-size:11px;color:#000;font-weight:700;letter-spacing:0.5px;left:319.5px;width:400px;text-align:center;">Einh</div><div class="t" style="top:348.59px;font-size:11px;color:#000;font-weight:700;letter-spacing:0.5px;left:618px;width:400px;text-align:center;">Beschreibung</div><div class="t" style="top:348.59px;font-size:11px;color:#000;font-weight:700;letter-spacing:0.5px;left:933.5px;width:400px;text-align:center;">EP</div><div class="t" style="top:348.59px;font-size:11px;color:#000;font-weight:700;letter-spacing:0.5px;left:1005px;width:400px;text-align:center;">GP</div><div class="r" style="left:470px;top:344px;width:34px;height:20px;border:3px solid #e8202a;"></div><div class="r" style="left:1101px;top:345px;width:65px;height:19px;border:3px solid #e8202a;"></div><div class="r" style="left:1245px;top:347px;width:16px;height:352px;background:#f0f0f0;"></div><svg style="left:1248px;top:350px" width="10" height="10" viewBox="0 0 10 10"><path d="M1.6 7.2L5 3.8L8.4 7.2" fill="none" stroke="#606060" stroke-width="2"/></svg><svg style="left:1248px;top:686px" width="10" height="10" viewBox="0 0 10 10"><path d="M1.6 3.5L5 6.9L8.4 3.5" fill="none" stroke="#606060" stroke-width="2"/></svg><div class="r" style="left:1246px;top:363px;width:15px;height:230px;background:#cdcdcd;"></div><div class="r" style="left:250px;top:366px;width:11px;height:11px;border:1px solid #a0a0a0;background:linear-gradient(#f2fff2,#aef0a0);"></div><div class="t" style="top:366.86px;font-size:10.8px;color:#008a00;left:282.6px;">Hinweistext</div><div class="t" style="top:366.90px;font-size:10.75px;color:#008a00;left:536.3px;">Erforderliche Renovierungsarbeiten inkl. Elektroinstallation in den 10 Mieteinheiten &quot;Alte Straße 17-19&quot;,</div><div class="t" style="top:379.70px;font-size:10.75px;color:#008a00;left:536.3px;">Bettenhausen</div><div class="r" style="left:250px;top:397px;width:11px;height:11px;border:1px solid #a8a8a8;background:linear-gradient(#fff,#ececec);"></div><div class="r" style="left:252px;top:402px;width:7px;height:1px;background:#c0c0c0;"></div><div class="r" style="left:255px;top:399px;width:1px;height:7px;background:#c8c8e8;"></div><div class="t" style="top:397.69px;font-size:11px;color:#000080;font-weight:700;letter-spacing:0.3px;left:283.7px;">Titel</div><div class="t" style="top:397.69px;font-size:11px;color:#000080;font-weight:700;letter-spacing:0.3px;left:359.4px;">1</div><div class="t" style="top:397.69px;font-size:11px;color:#000080;font-weight:700;letter-spacing:0.3px;left:397px;">Titel</div><div class="t" style="top:397.69px;font-size:11px;color:#000080;font-weight:700;letter-spacing:0.3px;right:778.5px;">5</div><div class="t" style="top:397.69px;font-size:11px;color:#000080;font-weight:700;letter-spacing:0.35px;left:537.5px;">Renovierung Diele</div><div class="t" style="top:410.69px;font-size:11px;color:#000080;font-weight:700;letter-spacing:0.35px;left:537.5px;">inkl. Verlegung neuer Lichschalter und zusätzlicher Steckdosen, tapezieren und streichen.</div><div class="t" style="top:397.69px;font-size:11px;color:#000080;font-weight:700;letter-spacing:0.3px;right:38.5px;">3.541,40 €</div><div class="r" style="left:250px;top:428px;width:11px;height:11px;border:1px solid #a8a8a8;background:linear-gradient(#fff,#ececec);"></div><div class="r" style="left:252px;top:433px;width:7px;height:1px;background:#c0c0c0;"></div><div class="r" style="left:255px;top:430px;width:1px;height:7px;background:#c8c8e8;"></div><div class="t" style="top:428.69px;font-size:11px;color:#000080;font-weight:700;letter-spacing:0.3px;left:283.7px;">Titel</div><div class="t" style="top:428.69px;font-size:11px;color:#000080;font-weight:700;letter-spacing:0.3px;left:359.4px;">2</div><div class="t" style="top:428.69px;font-size:11px;color:#000080;font-weight:700;letter-spacing:0.3px;left:397px;">Titel</div><div class="t" style="top:428.69px;font-size:11px;color:#000080;font-weight:700;letter-spacing:0.3px;right:778.5px;">4</div><div class="t" style="top:428.69px;font-size:11px;color:#000080;font-weight:700;letter-spacing:0.35px;left:537.5px;">Renovierung Wohnzimmer</div><div class="t" style="top:441.69px;font-size:11px;color:#000080;font-weight:700;letter-spacing:0.35px;left:537.5px;">inkl. Verlegung neuer Lichschalter und zusätzlicher Steckdosen, tapezieren und streichen.</div><div class="t" style="top:428.69px;font-size:11px;color:#000080;font-weight:700;letter-spacing:0.3px;right:38.5px;">4.946,76 €</div><div class="r" style="left:250px;top:459px;width:11px;height:11px;border:1px solid #a8a8a8;background:linear-gradient(#fff,#ececec);"></div><div class="r" style="left:252px;top:464px;width:7px;height:1px;background:#c0c0c0;"></div><div class="t" style="top:459.69px;font-size:11px;color:#000080;font-weight:700;letter-spacing:0.3px;left:283.7px;">Titel</div><div class="t" style="top:459.69px;font-size:11px;color:#000080;font-weight:700;letter-spacing:0.3px;left:359.4px;">2</div><div class="t" style="top:459.69px;font-size:11px;color:#000080;font-weight:700;letter-spacing:0.3px;left:397px;">Titel</div><div class="t" style="top:459.69px;font-size:11px;color:#000080;font-weight:700;letter-spacing:0.3px;right:778.5px;">10</div><div class="t" style="top:459.69px;font-size:11px;color:#000080;font-weight:700;letter-spacing:0.35px;left:537.5px;">Renovierung Küche</div><div class="t" style="top:472.69px;font-size:11px;color:#000080;font-weight:700;letter-spacing:0.35px;left:537.5px;">inkl. Verlegung neuer Lichschalter und zusätzlicher Steckdosen, tapezieren und streichen.</div><div class="t" style="top:459.69px;font-size:11px;color:#000080;font-weight:700;letter-spacing:0.3px;right:38.5px;">6.046,40 €</div><svg style="left:236px;top:464px" width="8" height="13" viewBox="0 0 8 13"><path d="M1 0.5L7 6.5L1 12.5z" fill="#000"/></svg><div class="r" style="left:256px;top:466px;width:1px;height:233px;background:#a0a0a0;"></div><div class="r" style="left:257px;top:495px;width:4px;height:1px;background:#a0a0a0;"></div><div class="r" style="left:261px;top:490px;width:11px;height:11px;border:1px solid #a8a8a8;background:linear-gradient(#fff,#ececec);"></div><div class="r" style="left:263px;top:495px;width:7px;height:1px;background:#c0c0c0;"></div><div class="r" style="left:266px;top:492px;width:1px;height:7px;background:#c8c8e8;"></div><div class="t" style="top:490.86px;font-size:10.8px;color:#0000f0;left:288.8px;">Set</div><div class="t" style="top:490.86px;font-size:10.8px;color:#0000f0;left:359px;">2.001</div><div class="t" style="top:490.86px;font-size:10.8px;color:#0000f0;left:397px;">m-ab 002</div><div class="t" style="top:490.86px;font-size:10.8px;color:#0000f0;right:778.6px;">16</div><div class="t" style="top:490.86px;font-size:10.8px;color:#0000f0;left:319.29999999999995px;width:400px;text-align:center;">m²</div><div class="t" style="top:490.90px;font-size:10.75px;color:#0000f0;left:536.3px;">mit Folie oder starkem Papier abdecken, Stösse verkleben und nach Gebrauch entfernen</div><div class="t" style="top:490.86px;font-size:10.8px;color:#0000f0;right:117.09999999999991px;">2,33 €</div><div class="t" style="top:490.86px;font-size:10.8px;color:#0000f0;right:38.09999999999991px;">37,28 €</div><div class="r" style="left:257px;top:526px;width:4px;height:1px;background:#a0a0a0;"></div><div class="r" style="left:261px;top:521px;width:11px;height:11px;border:1px solid #a8a8a8;background:linear-gradient(#fff,#ececec);"></div><div class="r" style="left:263px;top:526px;width:7px;height:1px;background:#c0c0c0;"></div><div class="r" style="left:266px;top:523px;width:1px;height:7px;background:#c8c8e8;"></div><div class="t" style="top:521.86px;font-size:10.8px;color:#0000f0;left:288.8px;">Set</div><div class="t" style="top:521.86px;font-size:10.8px;color:#0000f0;left:359px;">2.002</div><div class="t" style="top:521.86px;font-size:10.8px;color:#0000f0;left:397px;">m-pvi 100</div><div class="t" style="top:521.86px;font-size:10.8px;color:#0000f0;right:778.6px;">34</div><div class="t" style="top:521.86px;font-size:10.8px;color:#0000f0;left:319.29999999999995px;width:400px;text-align:center;">m²</div><div class="t" style="top:521.90px;font-size:10.75px;color:#0000f0;left:536.3px;">alten Leimfarbenanstrich abwaschen und gründlich nachwaschen</div><div class="t" style="top:521.86px;font-size:10.8px;color:#0000f0;right:117.09999999999991px;">5,93 €</div><div class="t" style="top:521.86px;font-size:10.8px;color:#0000f0;right:38.09999999999991px;">201,62 €</div><div class="r" style="left:257px;top:557px;width:4px;height:1px;background:#a0a0a0;"></div><div class="r" style="left:261px;top:552px;width:11px;height:11px;border:1px solid #a8a8a8;background:linear-gradient(#fff,#ececec);"></div><div class="r" style="left:263px;top:557px;width:7px;height:1px;background:#c0c0c0;"></div><div class="r" style="left:266px;top:554px;width:1px;height:7px;background:#c8c8e8;"></div><div class="t" style="top:552.86px;font-size:10.8px;color:#0000f0;left:288.8px;">Set</div><div class="t" style="top:552.86px;font-size:10.8px;color:#0000f0;left:359px;">2.003</div><div class="t" style="top:552.86px;font-size:10.8px;color:#0000f0;left:397px;">m-pvi 051</div><div class="t" style="top:552.86px;font-size:10.8px;color:#0000f0;right:778.6px;">34</div><div class="t" style="top:552.86px;font-size:10.8px;color:#0000f0;left:319.29999999999995px;width:400px;text-align:center;">m²</div><div class="t" style="top:552.90px;font-size:10.75px;color:#0000f0;left:536.3px;">kleine Beschädigungen am Putz beispachteln</div><div class="t" style="top:552.86px;font-size:10.8px;color:#0000f0;right:117.09999999999991px;">0,81 €</div><div class="t" style="top:552.86px;font-size:10.8px;color:#0000f0;right:38.09999999999991px;">27,54 €</div><div class="r" style="left:257px;top:588px;width:4px;height:1px;background:#a0a0a0;"></div><div class="r" style="left:261px;top:583px;width:11px;height:11px;border:1px solid #a8a8a8;background:linear-gradient(#fff,#ececec);"></div><div class="r" style="left:263px;top:588px;width:7px;height:1px;background:#c0c0c0;"></div><div class="r" style="left:266px;top:585px;width:1px;height:7px;background:#c8c8e8;"></div><div class="t" style="top:583.86px;font-size:10.8px;color:#0000f0;left:288.8px;">Set</div><div class="t" style="top:583.86px;font-size:10.8px;color:#0000f0;left:359px;">2.004</div><div class="t" style="top:583.86px;font-size:10.8px;color:#0000f0;left:397px;">m-pvi 001</div><div class="t" style="top:583.86px;font-size:10.8px;color:#0000f0;right:778.6px;">34</div><div class="t" style="top:583.86px;font-size:10.8px;color:#0000f0;left:319.29999999999995px;width:400px;text-align:center;">m²</div><div class="t" style="top:583.90px;font-size:10.75px;color:#0000f0;left:536.3px;">leichte Verunreinigungen von Staub, vereinzelten Putzspritzern und dgl. entfernen</div><div class="t" style="top:583.86px;font-size:10.8px;color:#0000f0;right:117.09999999999991px;">1,46 €</div><div class="t" style="top:583.86px;font-size:10.8px;color:#0000f0;right:38.09999999999991px;">49,64 €</div><div class="r" style="left:257px;top:619px;width:4px;height:1px;background:#a0a0a0;"></div><div class="r" style="left:261px;top:614px;width:11px;height:11px;border:1px solid #a8a8a8;background:linear-gradient(#fff,#ececec);"></div><div class="r" style="left:263px;top:619px;width:7px;height:1px;background:#c0c0c0;"></div><div class="r" style="left:266px;top:616px;width:1px;height:7px;background:#c8c8e8;"></div><div class="t" style="top:614.86px;font-size:10.8px;color:#0000f0;left:288.8px;">Set</div><div class="t" style="top:614.86px;font-size:10.8px;color:#0000f0;left:359px;">2.005</div><div class="t" style="top:614.86px;font-size:10.8px;color:#0000f0;left:397px;">m-pi 021</div><div class="t" style="top:614.86px;font-size:10.8px;color:#0000f0;right:778.6px;">34</div><div class="t" style="top:614.86px;font-size:10.8px;color:#0000f0;left:319.29999999999995px;width:400px;text-align:center;">m²</div><div class="t" style="top:614.90px;font-size:10.75px;color:#0000f0;left:536.3px;">Latexfarbe nach DIN EN 13300 Klasse 2, matt, einmaliger Anstrich auf bereits gestrichenen Flächen weiß oder hell</div><div class="t" style="top:627.70px;font-size:10.75px;color:#0000f0;left:536.3px;">getönt</div><div class="t" style="top:614.86px;font-size:10.8px;color:#0000f0;right:117.09999999999991px;">3,92 €</div><div class="t" style="top:614.86px;font-size:10.8px;color:#0000f0;right:38.09999999999991px;">133,28 €</div><div class="r" style="left:257px;top:650px;width:4px;height:1px;background:#a0a0a0;"></div><div class="r" style="left:261px;top:645px;width:11px;height:11px;border:1px solid #a8a8a8;background:linear-gradient(#fff,#ececec);"></div><div class="r" style="left:263px;top:650px;width:7px;height:1px;background:#c0c0c0;"></div><div class="r" style="left:266px;top:647px;width:1px;height:7px;background:#c8c8e8;"></div><div class="t" style="top:645.86px;font-size:10.8px;color:#0000f0;left:288.8px;">Set</div><div class="t" style="top:645.86px;font-size:10.8px;color:#0000f0;left:359px;">2.006</div><div class="t" style="top:645.86px;font-size:10.8px;color:#0000f0;left:397px;">e-st 001</div><div class="t" style="top:645.86px;font-size:10.8px;color:#0000f0;right:778.6px;">3</div><div class="t" style="top:645.86px;font-size:10.8px;color:#0000f0;left:319.29999999999995px;width:400px;text-align:center;">Stck</div><div class="t" style="top:645.90px;font-size:10.75px;color:#0000f0;left:536.3px;">Aus/Wechselschalter u. P. Standard liefern und montieren</div><div class="t" style="top:645.86px;font-size:10.8px;color:#0000f0;right:117.09999999999991px;">6,08 €</div><div class="t" style="top:645.86px;font-size:10.8px;color:#0000f0;right:38.09999999999991px;">18,24 €</div><div class="r" style="left:257px;top:681px;width:4px;height:1px;background:#a0a0a0;"></div><div class="r" style="left:261px;top:676px;width:11px;height:11px;border:1px solid #a8a8a8;background:linear-gradient(#fff,#ececec);"></div><div class="r" style="left:263px;top:681px;width:7px;height:1px;background:#c0c0c0;"></div><div class="r" style="left:266px;top:678px;width:1px;height:7px;background:#c8c8e8;"></div><div class="t" style="top:676.86px;font-size:10.8px;color:#0000f0;left:288.8px;">Set</div><div class="t" style="top:676.86px;font-size:10.8px;color:#0000f0;left:359px;">2.007</div><div class="t" style="top:676.86px;font-size:10.8px;color:#0000f0;left:397px;">e-st 011</div><div class="t" style="top:676.86px;font-size:10.8px;color:#0000f0;right:778.6px;">3</div><div class="t" style="top:676.86px;font-size:10.8px;color:#0000f0;left:319.29999999999995px;width:400px;text-align:center;">Stck</div><div class="t" style="top:676.90px;font-size:10.75px;color:#0000f0;left:536.3px;">Schalterabdeckung Standard liefern und montieren</div><div class="t" style="top:676.86px;font-size:10.8px;color:#0000f0;right:117.09999999999991px;">1,56 €</div><div class="t" style="top:676.86px;font-size:10.8px;color:#0000f0;right:38.09999999999991px;">4,68 €</div><div class="t" style="top:705.43px;font-size:10px;color:#000;font-weight:700;letter-spacing:0.15px;left:230px;">Zahlungsart *</div><div class="r" style="left:230px;top:717px;width:633px;height:16px;border:1px solid #000;background:#fff;"></div><div class="t" style="top:720.18px;font-size:9px;color:#000;letter-spacing:0.21px;left:232px;">Zahlbar innerhalb von 30 Tagen ohne Abzug, 2% Skonto innerhalb von 7 Tagen</div><div class="r" style="left:862px;top:717px;width:17px;height:16px;border:1px solid #000;background:#fff;"></div><svg style="left:866px;top:721px" width="9" height="9" viewBox="0 0 9 9"><path d="M1.5 1.5l6 6M7.5 1.5l-6 6" stroke="#e04040" stroke-width="1.3"/></svg><div class="r" style="left:883px;top:717px;width:69px;height:16px;border:1px solid #000;background:#fff;"></div><div class="t" style="top:706.13px;font-size:9px;color:#000;font-weight:700;letter-spacing:0.62px;left:883.6px;">GP Summe</div><div class="t" style="top:720.18px;font-size:9px;color:#000;letter-spacing:0.1px;left:885.5px;">14.534,56 €</div><div class="r" style="left:951px;top:717px;width:69px;height:16px;border:1px solid #000;background:#f0f0f0;"></div><div class="t" style="top:706.13px;font-size:9px;color:#000;font-weight:700;letter-spacing:0.62px;left:951.6px;">Rabattfähig</div><div class="t" style="top:720.18px;font-size:9px;color:#000;letter-spacing:0.1px;left:953.5px;">14.534,56 €</div><div class="r" style="left:1019px;top:717px;width:41px;height:16px;border:1px solid #000;background:#fff;"></div><div class="t" style="top:706.13px;font-size:9px;color:#000;font-weight:700;letter-spacing:0.62px;left:1019.6px;">± % *</div><div class="r" style="left:1059px;top:717px;width:69px;height:16px;border:1px solid #000;background:#fff;"></div><div class="t" style="top:706.13px;font-size:9px;color:#000;font-weight:700;letter-spacing:0.62px;left:1059.6px;">Netto</div><div class="t" style="top:720.18px;font-size:9px;color:#000;letter-spacing:0.1px;left:1061.5px;">14.534,56 €</div><div class="r" style="left:1127px;top:717px;width:69px;height:16px;border:1px solid #000;background:#fff;"></div><div class="t" style="top:706.13px;font-size:9px;color:#000;font-weight:700;letter-spacing:0.62px;left:1127.6px;">USt.</div><div class="t" style="top:720.18px;font-size:9px;color:#000;letter-spacing:0.1px;left:1129.5px;">2.761,57 €</div><div class="r" style="left:1195px;top:717px;width:68px;height:16px;border:1px solid #000;background:#fff;"></div><div class="t" style="top:706.13px;font-size:9px;color:#000;font-weight:700;letter-spacing:0.62px;left:1195.6px;">Brutto</div><div class="t" style="top:720.18px;font-size:9px;color:#000;letter-spacing:0.1px;left:1197.5px;">17.296,13 €</div><div class="r" style="left:0px;top:769px;width:1280px;height:1px;background:#fff;"></div><div class="r" style="left:0px;top:751px;width:649px;height:18px;border-top:1px solid #a0a0a0;border-left:1px solid #a0a0a0;border-right:1px solid #fafafa;"></div><div class="r" style="left:652px;top:751px;width:88px;height:18px;border-top:1px solid #a0a0a0;border-left:1px solid #a0a0a0;border-right:1px solid #fafafa;"></div><div class="t" style="top:754.09px;font-size:12.3px;color:#000;left:659.3px;">Vorgang.Titel</div><div class="r" style="left:743px;top:751px;width:218px;height:18px;border-top:1px solid #a0a0a0;border-left:1px solid #a0a0a0;border-right:1px solid #fafafa;"></div><div class="t" style="top:754.09px;font-size:12.3px;color:#000;left:750.3px;">1. Anzahlungsrechnung (201900020)</div><div class="r" style="left:964px;top:751px;width:47px;height:18px;border-top:1px solid #a0a0a0;border-left:1px solid #a0a0a0;border-right:1px solid #fafafa;"></div><div class="t" style="top:754.09px;font-size:12.3px;color:#000;left:971.3px;">felder</div><div class="r" style="left:1014px;top:751px;width:36px;height:18px;border-top:1px solid #a0a0a0;border-left:1px solid #a0a0a0;border-right:1px solid #fafafa;"></div><div class="t" style="top:754.09px;font-size:12.3px;color:#000;left:1021.3px;">#51</div><div class="r" style="left:1053px;top:751px;width:215px;height:18px;border-top:1px solid #a0a0a0;border-left:1px solid #a0a0a0;border-right:1px solid #fafafa;"></div><div class="t" style="top:754.09px;font-size:12.3px;color:#000;left:1060.3px;">admin - Moser-Dokumentation.mdb</div>
</body></html>
